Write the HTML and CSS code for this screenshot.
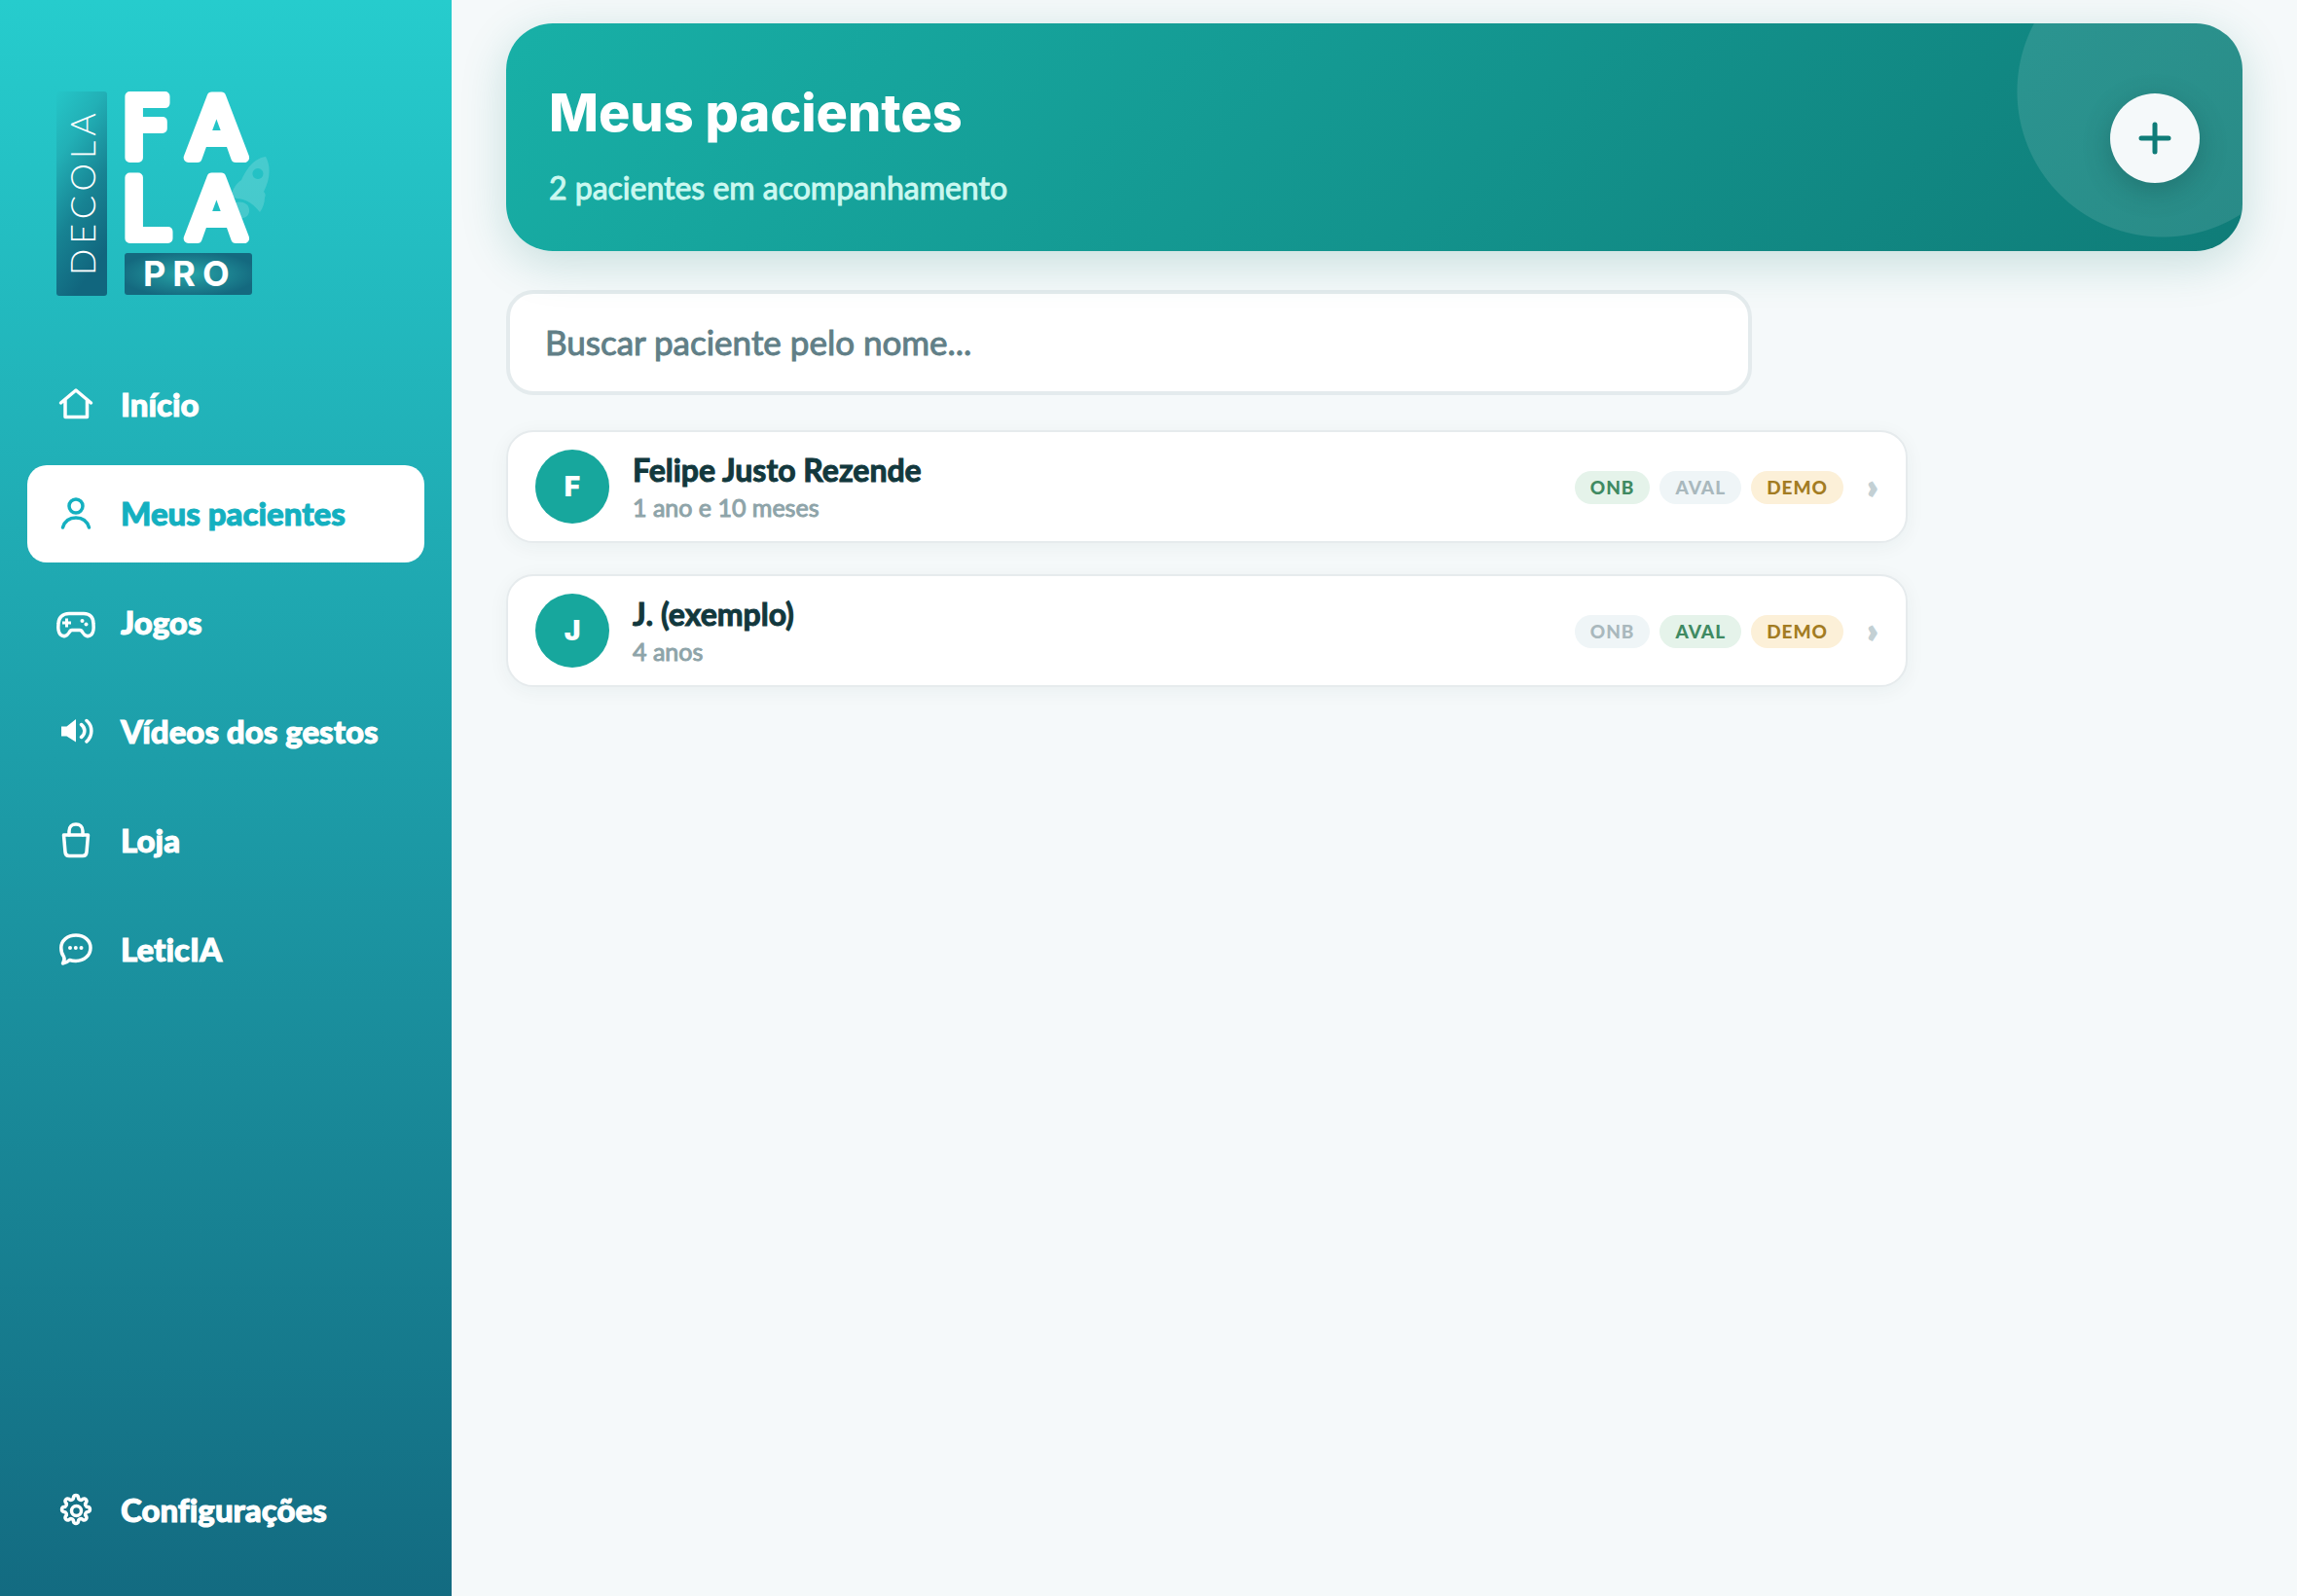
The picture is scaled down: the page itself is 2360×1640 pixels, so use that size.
FILE: index.html
```html
<!DOCTYPE html>
<html lang="pt-BR">
<head>
    <meta charset="UTF-8">
    <meta name="viewport" content="width=device-width, initial-scale=1.0">
    <title>Meus pacientes</title>
    <link rel="stylesheet" href="styles.css">
</head>
<body>

    <div class="app">
        <aside class="sidebar">
            <!-- Logo -->
            <svg class="logo" viewBox="0 0 222 212" role="img" aria-label="Decola Fala Pro">
                <defs>
                    <linearGradient id="barFill" x1="0" y1="0" x2="0.35" y2="1">
                        <stop offset="0" stop-color="#25c6c8"/>
                        <stop offset="0.3" stop-color="#22b0b6"/>
                        <stop offset="0.65" stop-color="#178393"/>
                        <stop offset="1" stop-color="#11667e"/>
                    </linearGradient>
                    <radialGradient id="proFill" cx="0.5" cy="0.5" r="0.55">
                        <stop offset="0" stop-color="#27a5a8"/>
                        <stop offset="1" stop-color="#14697f"/>
                    </radialGradient>
                </defs>
                <!-- Rocket -->
                <g class="logo-rocket">
                    <path fill-rule="evenodd" d="M215 67C205 68 196 77 190 91C185 94 182 99 179 107L185 110C194 110 202 115 209 124C212 120 214 114 214 109C215 107 215 105 213 103C219 91 221 78 215 67ZM207 79a5.500 5.500 0 1 1 -.1 0Z"/>
                    <path d="M184 114C192 112 199 116 198 124C197 128 194 130 190 130Z"/>
                </g>
                <rect x="0" y="0" width="52" height="210" rx="3" fill="url(#barFill)"/>
                <text class="logo-side" transform="translate(40 189) rotate(-90)">DECOLA</text>
                <text class="logo-main" x="67 135" y="68">FA</text>
                <text class="logo-main" x="67 135" y="151">LA</text>
                <rect x="70" y="166" width="131" height="43" rx="3" fill="url(#proFill)"/>
                <text class="logo-pro" x="89" y="200">PRO</text>
            </svg>

            <!-- Menu -->
            <nav class="menu">
                <a class="menu-item" href="#">
                    <svg class="icon" viewBox="0 0 36 36"><path d="M2.500 17L18 4L33.500 17M7 14V31.500H29.500V14"/></svg>
                    Início
                </a>
                <a class="menu-item active" href="#">
                    <svg class="icon" viewBox="0 0 36 36"><circle cx="18" cy="11" r="7"/><path d="M4.500 33C6.500 26.500 11.500 23 18 23S29.500 26.500 31.500 33"/></svg>
                    Meus pacientes
                </a>
                <a class="menu-item" href="#">
                    <svg class="icon" viewBox="0 0 36 36"><path d="M11 9.500H26C33 9.500 36 14 36 20C36.500 25 36 29 34 31C31 34 27 32.500 25 29C24 27 23 26.500 22 26.500H14C13 26.500 12 27 11 29C9 32.500 5 34 2 31C0 29 -.5 25 0 20C0 14 4 9.500 11 9.500Z"/><path class="fill" d="M7 14.500h3v3h3v3h-3v3h-3v-3h-3v-3h3z"/><circle class="fill" cx="24.500" cy="17" r="2"/><circle class="fill" cx="28.500" cy="20.500" r="2"/></svg>
                    Jogos
                </a>
                <a class="menu-item" href="#">
                    <svg class="icon" viewBox="0 0 36 36"><path class="fill" d="M3 13.500H8.500L18 6V29.500L8.500 23.500H3Z"/><path d="M23.500 11.500C28 15 28 21 23.500 24.500M29 7.500C35.500 13 35.500 23 29 29"/></svg>
                    Vídeos dos gestos
                </a>
                <a class="menu-item" href="#">
                    <svg class="icon" viewBox="0 0 36 36"><path d="M5.500 13H30.500L29 30.500C28.800 33 27.500 34.500 25 34.500H11C8.500 34.500 7.200 33 7 30.500Z"/><path d="M11 13V9C11 4.500 14 2 18 2S25 4.500 25 9V13"/></svg>
                    Loja
                </a>
                <a class="menu-item" href="#">
                    <svg class="icon" viewBox="0 0 36 36"><path d="M18 4C26.500 4 33 9.500 33 17S26.500 30.500 18 30.500C15 30.500 13 30 11.500 29.500C9.500 31.500 7 32.500 4.500 33C6 31 6.500 28.500 5.500 26C3.500 23.500 2.800 20 2.800 17C2.800 9.500 9.500 4 18 4Z"/><circle class="fill" cx="12" cy="17" r="2"/><circle class="fill" cx="17.800" cy="17" r="2"/><circle class="fill" cx="23.500" cy="17" r="2"/></svg>
                    LeticIA
                </a>
                <a class="menu-item settings" href="#">
                    <svg class="icon" viewBox="0 0 36 36"><path d="M30.550 15.500A2.600 2.600 0 0 1 30.550 20.500A2.600 2.600 0 0 0 28.640 25.110A2.600 2.600 0 0 1 25.110 28.640A2.600 2.600 0 0 0 20.500 30.550A2.600 2.600 0 0 1 15.500 30.550A2.600 2.600 0 0 0 10.890 28.640A2.600 2.600 0 0 1 7.360 25.110A2.600 2.600 0 0 0 5.450 20.500A2.600 2.600 0 0 1 5.450 15.500A2.600 2.600 0 0 0 7.360 10.890A2.600 2.600 0 0 1 10.890 7.360A2.600 2.600 0 0 0 15.500 5.450A2.600 2.600 0 0 1 20.500 5.450A2.600 2.600 0 0 0 25.110 7.360A2.600 2.600 0 0 1 28.640 10.890A2.600 2.600 0 0 0 30.550 15.500Z"/><circle cx="18.500" cy="19.500" r="5"/></svg>
                    Configurações
                </a>
            </nav>
        </aside>

        <main class="content">
            <header class="hero">
                <div class="hero-text">
                    <h1>Meus pacientes</h1>
                    <p>2 pacientes em acompanhamento</p>
                </div>
                <button type="button" class="add-btn" aria-label="Adicionar paciente">
                    <svg viewBox="0 0 36 36"><path d="M18 4V32M4 18H32"/></svg>
                </button>
            </header>

            <input type="search" class="search" placeholder="Buscar paciente pelo nome..." aria-label="Buscar paciente pelo nome">

            <div class="patients">
                <a class="patient" href="#">
                    <span class="avatar">F</span>
                    <span class="info">
                        <span class="name">Felipe Justo Rezende</span>
                        <span class="age">1 ano e 10 meses</span>
                    </span>
                    <span class="badges">
                        <span class="badge done">ONB</span>
                        <span class="badge">AVAL</span>
                        <span class="badge demo">DEMO</span>
                    </span>
                    <span class="arrow">›</span>
                </a>
                <a class="patient" href="#">
                    <span class="avatar">J</span>
                    <span class="info">
                        <span class="name">J. (exemplo)</span>
                        <span class="age">4 anos</span>
                    </span>
                    <span class="badges">
                        <span class="badge">ONB</span>
                        <span class="badge done">AVAL</span>
                        <span class="badge demo">DEMO</span>
                    </span>
                    <span class="arrow">›</span>
                </a>
            </div>
        </main>
    </div>

</body>
</html>
```
FILE: styles.css
```css
* {
    box-sizing: border-box;
}

body {
    margin: 0;
    font-family: Lato, "Open Sans", sans-serif;
    font-variant-ligatures: none;
    background-color: #f5f9fa;
    color: #12383d;
}

a {
    color: inherit;
    text-decoration: none;
}

.app {
    display: flex;
    min-height: 100vh;
}

/* Sidebar */
.sidebar {
    display: flex;
    flex-direction: column;
    flex: 0 0 464px;
    padding: 94px 28px 38px;
    background: linear-gradient(180deg, #26cccd, #136b81);
}

.logo {
    width: 222px;
    height: 212px;
    margin: 0 0 60px 30px;
    overflow: visible;
}

.logo text {
    fill: white;
}

.logo-rocket {
    fill: rgba(255, 255, 255, 0.16);
}

.logo-side {
    font-size: 36px;
    font-weight: 300;
    letter-spacing: 5px;
}

.logo-main {
    font-family: "DejaVu Sans", sans-serif;
    font-size: 86px;
    stroke: white;
    stroke-width: 10px;
    stroke-linejoin: round;
}

.logo-pro {
    font-family: Inter, sans-serif;
    font-size: 36px;
    font-weight: 700;
    letter-spacing: 7px;
}

.menu {
    display: flex;
    flex-direction: column;
    flex: 1;
    gap: 12px;
}

.menu-item {
    display: flex;
    align-items: center;
    gap: 28px;
    height: 100px;
    padding: 0 32px 2px;
    border-radius: 20px;
    color: white;
    font-size: 33px;
    font-weight: 900;
    -webkit-text-stroke: 1px;
}

.menu-item.active {
    background-color: white;
    color: #14b0c0;
}

.settings {
    margin-top: auto;
}

.icon {
    width: 36px;
    height: 36px;
    overflow: visible;
    fill: none;
    stroke: currentColor;
    stroke-width: 3.5;
    stroke-linecap: round;
    stroke-linejoin: round;
}

.icon .fill {
    fill: currentColor;
    stroke: none;
}

/* Content */
.content {
    flex: 1;
    padding: 24px 56px;
}

.hero {
    position: relative;
    display: flex;
    align-items: center;
    justify-content: space-between;
    padding: 47px 44px 45px;
    border-radius: 48px;
    background: linear-gradient(135deg, #18b0a7, #0f7c78);
    box-shadow: 0 12px 48px rgba(15, 118, 110, 0.2);
}

.hero::before {
    content: "";
    position: absolute;
    inset: 0;
    border-radius: 48px;
    background: radial-gradient(circle 150px at calc(100% - 82px) 70px, rgba(255, 255, 255, 0.11) 149px, transparent 150px);
}

.hero-text {
    position: relative;
}

.hero h1 {
    margin: 0 0 12px;
    color: white;
    font-family: Inter, sans-serif;
    font-size: 54px;
    font-weight: 800;
    line-height: 90px;
}

.hero p {
    margin: 0;
    color: #cbf8f0;
    font-size: 32px;
    line-height: 40px;
    -webkit-text-stroke: 1px;
}

.add-btn {
    position: relative;
    display: flex;
    align-items: center;
    justify-content: center;
    width: 92px;
    height: 92px;
    border: none;
    border-radius: 50%;
    background-color: #f5f9fa;
    box-shadow: 0 8px 28px rgba(15, 60, 60, 0.3);
    cursor: pointer;
}

.add-btn svg {
    width: 36px;
    height: 36px;
    fill: none;
    stroke: #0f7c78;
    stroke-width: 5px;
    stroke-linecap: round;
}

.search {
    display: block;
    width: 100%;
    max-width: 1280px;
    height: 108px;
    margin: 40px 0 36px;
    padding: 0 36px 2px;
    border: 4px solid #e4ebed;
    border-radius: 28px;
    background-color: white;
    color: #12383d;
    font-family: inherit;
    font-size: 35px;
    outline: none;
}

.search::placeholder {
    color: #617f87;
    -webkit-text-stroke: 1px;
}

.patients {
    display: flex;
    flex-direction: column;
    gap: 32px;
    max-width: 1440px;
}

.patient {
    display: flex;
    align-items: center;
    gap: 24px;
    padding: 18px 28px;
    border: 2px solid #e6ebed;
    border-radius: 28px;
    background-color: white;
    box-shadow: 0 4px 20px rgba(18, 56, 61, 0.05);
}

.avatar {
    display: flex;
    align-items: center;
    justify-content: center;
    width: 76px;
    height: 76px;
    border-radius: 50%;
    background-color: #17a79d;
    color: white;
    font-family: Inter, sans-serif;
    font-size: 28px;
    font-weight: 900;
}

.info {
    display: flex;
    flex-direction: column;
    flex: 1;
}

.name {
    font-size: 32px;
    font-weight: 700;
    line-height: 42px;
    -webkit-text-stroke: 1px;
}

.age {
    color: #8ea4a9;
    font-size: 25px;
    line-height: 34px;
    -webkit-text-stroke: 1px;
}

.badges {
    display: flex;
    gap: 10px;
    padding-top: 2px;
}

.badge {
    padding: 0 16px;
    border-radius: 17px;
    background-color: #eff5f7;
    color: #a9b8bd;
    font-size: 19px;
    font-weight: 900;
    letter-spacing: 1px;
    line-height: 34px;
}

.badge.done {
    background-color: #e5f3ea;
    color: #3f8a62;
}

.badge.demo {
    background-color: #fcf0d8;
    color: #a37c22;
}

.arrow {
    width: 12px;
    padding-bottom: 2px;
    color: #c3d0d4;
    font-size: 30px;
    font-weight: 900;
    text-align: center;
    -webkit-text-stroke: 3px;
}
```
